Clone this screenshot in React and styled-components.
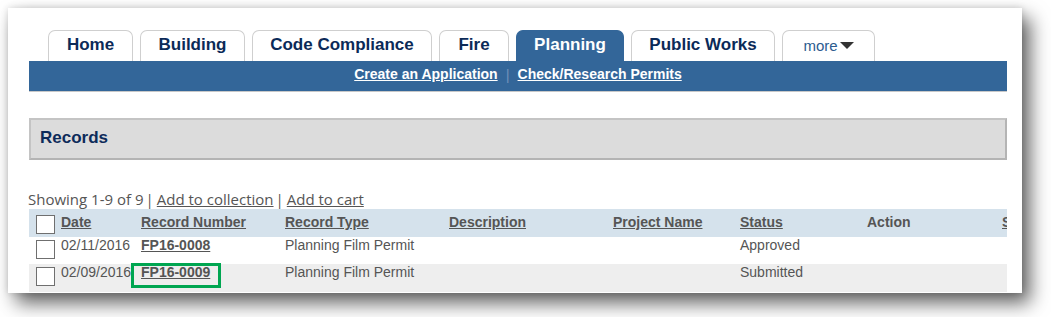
import styled, { createGlobalStyle } from 'styled-components';

const GlobalStyle = createGlobalStyle`
  body {
    margin: 0;
    background: #ffffff;
    font-family: "Liberation Sans", Arial, sans-serif;
  }
`;

const tabs = [
  { label: 'Home', width: 85 },
  { label: 'Building', width: 105 },
  { label: 'Code Compliance', width: 180 },
  { label: 'Fire', width: 70 },
  { label: 'Planning', width: 108, active: true },
  { label: 'Public Works', width: 144 },
];

const columns = [
  { label: 'Date', link: true },
  { label: 'Record Number', link: true },
  { label: 'Record Type', link: true },
  { label: 'Description', link: true },
  { label: 'Project Name', link: true },
  { label: 'Status', link: true },
  { label: 'Action', link: false },
  { label: 'S', link: true },
];

const records = [
  { date: '02/11/2016', number: 'FP16-0008', type: 'Planning Film Permit', status: 'Approved' },
  { date: '02/09/2016', number: 'FP16-0009', type: 'Planning Film Permit', status: 'Submitted', marked: true },
];

export default function App() {
  return (
    <>
      <GlobalStyle />
      <Page>
        <Card>
          <TabRow>
            {tabs.map(t => (
              <Tab key={t.label} $width={t.width} $active={t.active}>{t.label}</Tab>
            ))}
            <MoreTab>
              more<Caret />
            </MoreTab>
          </TabRow>
          <SubNav>
            <SubLink>Create an Application</SubLink>
            <Divider>|</Divider>
            <SubLink>Check/Research Permits</SubLink>
          </SubNav>

          <Panel>Records</Panel>

          <Summary>
            Showing 1-9 of 9<Bar>|</Bar><SummaryLink>Add to collection</SummaryLink><Bar>|</Bar><SummaryLink>Add to cart</SummaryLink>
          </Summary>

          <Table>
            <HeadRow>
              <Cell><Check /></Cell>
              {columns.map(c => (
                <HeadCell key={c.label} $link={c.link}>{c.label}</HeadCell>
              ))}
            </HeadRow>
            {records.map((r, i) => (
              <BodyRow key={r.number} $alt={i % 2 === 1}>
                <Cell><Check /></Cell>
                <Cell>{r.date}</Cell>
                <Cell>
                  <RecordLink>{r.number}</RecordLink>
                  {r.marked && <Highlight />}
                </Cell>
                <Cell>{r.type}</Cell>
                <Cell />
                <Cell />
                <Cell>{r.status}</Cell>
                <Cell />
                <Cell />
              </BodyRow>
            ))}
          </Table>
        </Card>
      </Page>
    </>
  );
}

const Page = styled.div`
  width: 1051px;
  height: 317px;
  overflow: hidden;
  padding: 8px 0 0 8px;
  box-sizing: border-box;
`
const Card = styled.div`
  width: 1014px;
  height: 285px;
  box-sizing: border-box;
  padding: 22px 15px 0 21px;
  background: #ffffff;
  overflow: hidden;
  box-shadow: 8px 10px 18px rgba(0, 0, 0, 0.62), 0 0 7px rgba(0, 0, 0, 0.14);
`
const TabRow = styled.div`
  display: flex;
  align-items: flex-end;
  gap: 7px;
  padding-left: 19px;
  height: 31px;
`
const Tab = styled.div`
  width: ${props => props.$width}px;
  height: 31px;
  box-sizing: border-box;
  display: flex;
  justify-content: center;
  align-items: center;
  padding-bottom: 2px;
  border: 1px solid ${props => props.$active ? '#336699' : '#cfcfcf'};
  border-bottom: none;
  border-radius: 7px 7px 0 0;
  background: ${props => props.$active ? '#336699' : '#ffffff'};
  color: ${props => props.$active ? '#ffffff' : '#0b2a58'};
  font-size: 17px;
  font-weight: bold;
`
const MoreTab = styled(Tab).attrs({ $width: 93 })`
  font-weight: normal;
  font-size: 15px;
  color: #2c5b8f;
`
const Caret = styled.span`
  display: inline-block;
  margin-left: 2px;
  margin-top: 1px;
  border-left: 7px solid transparent;
  border-right: 7px solid transparent;
  border-top: 7px solid #333333;
`
const SubNav = styled.div`
  height: 31px;
  background: #336699;
  border-bottom: 1px solid #c8c8c8;
  box-sizing: border-box;
  display: flex;
  justify-content: center;
  align-items: center;
  padding-bottom: 4px;
`
const SubLink = styled.a`
  color: #ffffff;
  font-size: 14px;
  font-weight: bold;
  text-decoration: underline;
`
const Divider = styled.span`
  color: #6f90b8;
  font-size: 15px;
  margin: 0 8px 0 8px;
`
const Panel = styled.div`
  margin-top: 26px;
  height: 42px;
  box-sizing: border-box;
  background: #dcdcdc;
  border: 2px solid #b4b4b4;
  border-top-color: #c4c4c4;
  border-left-color: #c4c4c4;
  display: flex;
  align-items: center;
  padding: 0 0 2px 9px;
  color: #0d2b5a;
  font-size: 17px;
  font-weight: bold;
`
const Summary = styled.div`
  margin: 29px 0 0 -1px;
  height: 20px;
  display: flex;
  align-items: center;
  font-family: "Open Sans", "DejaVu Sans", sans-serif;
  font-size: 15px;
  color: #555555;
  white-space: nowrap;
`
const Bar = styled.span`
  margin: 0 3px 0 2px;
`
const SummaryLink = styled.a`
  color: #555555;
  text-decoration: underline;
`
const Table = styled.div`
  width: 100%;
  overflow: hidden;
`
const RowBase = styled.div`
  display: grid;
  grid-template-columns: 32px 80px 144px 164px 164px 127px 127px 135px 60px;
  white-space: nowrap;
  font-size: 14px;
  color: #555555;
`
const HeadRow = styled(RowBase)`
  height: 28px;
  background: #d5e2ec;
  align-items: center;
`
const BodyRow = styled(RowBase)`
  height: ${props => props.$alt ? 28 : 27}px;
  background: ${props => props.$alt ? '#eeeeee' : '#ffffff'};
  align-items: start;
  padding-top: 0;
  box-sizing: border-box;
`
const Cell = styled.div`
  position: relative;
  display: flex;
  align-items: flex-start;
`
const HeadCell = styled.div`
  font-weight: bold;
  text-decoration: ${props => props.$link ? 'underline' : 'none'};
  padding-bottom: 2px;
`
const Check = styled.span`
  display: block;
  width: 19px;
  height: 19px;
  margin: 3px 0 0 7px;
  box-sizing: border-box;
  border: 1px solid #6f6f6f;
  background: #ffffff;
`
const RecordLink = styled.a`
  font-weight: bold;
  text-decoration: underline;
  color: #555555;
`
const Highlight = styled.span`
  position: absolute;
  left: -10px;
  top: -1px;
  width: 90px;
  height: 25px;
  box-sizing: border-box;
  border: 3px solid #00a651;
`
